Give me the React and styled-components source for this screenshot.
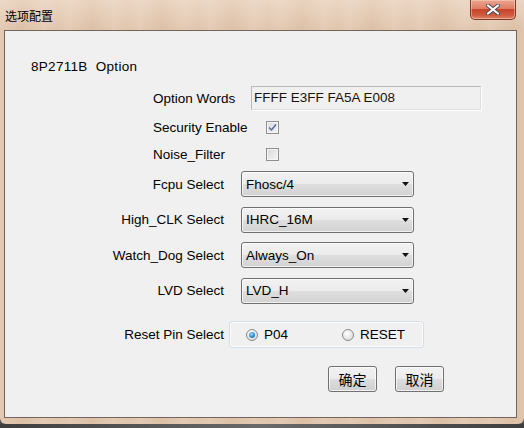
import React from "react";
import styled, { createGlobalStyle } from "styled-components";

const GlobalStyle = createGlobalStyle`
  html, body {
    margin: 0;
    padding: 0;
    background: #4f4f4f;
    font-family: "Liberation Sans", Arial, sans-serif;
  }
`;

const Window = styled.div`
  width: 524px;
  height: 424px;
  display: flex;
  flex-direction: column;
  border-radius: 0 0 6px 6px;
  background:
    linear-gradient(to bottom, rgba(255, 245, 235, 0.35), rgba(255, 245, 235, 0) 30px),
    repeating-linear-gradient(
      90deg,
      rgba(150, 100, 60, 0) 0px,
      rgba(150, 100, 60, 0.1) 22px,
      rgba(150, 100, 60, 0) 44px,
      rgba(150, 100, 60, 0.05) 58px,
      rgba(150, 100, 60, 0) 70px
    ),
    #e4cab3;
`;

const TitleBar = styled.div`
  height: 30px;
  display: flex;
  justify-content: space-between;
  align-items: flex-start;
  flex-shrink: 0;
`;

const Title = styled.div`
  padding: 9px 0 0 5px;
  font-family: "Noto Sans CJK SC", sans-serif;
  font-size: 12px;
  line-height: 14px;
  color: #000;
`;

const CloseButton = styled.div`
  width: 44px;
  height: 19px;
  margin-right: 8px;
  border: 1px solid #7d3b2c;
  border-top: none;
  border-radius: 0 0 5px 5px;
  display: flex;
  align-items: center;
  justify-content: center;
  background: linear-gradient(
    to bottom,
    #eba592 0%,
    #df7d65 45%,
    #c8442b 50%,
    #cf5a3f 80%,
    #e0866a 100%
  );
  box-shadow: inset 0 0 0 1px rgba(255, 220, 200, 0.45);
`;

const Client = styled.div`
  height: 386px;
  margin: 0 7px 0 4px;
  border: 1px solid #6f665e;
  background: #f0f0f0;
  display: flex;
  flex-direction: column;
  font-size: 13.5px;
  color: #000;
`;

const Heading = styled.div`
  margin: 28px 0 0 26px;
  line-height: 16px;
  height: 16px;
  white-space: pre;
  letter-spacing: 0.3px;
`;

const TopGrid = styled.div`
  margin: 11px 0 0 148px;
  display: grid;
  grid-template-columns: 98px auto;
  grid-template-rows: 24px 18px 18px;
  row-gap: 8.5px;
  align-items: center;
`;

const SelectGrid = styled.div`
  margin: ${(p) => p.$top}px 0 0 95px;
  display: grid;
  grid-template-columns: 124px auto;
  row-gap: 9.5px;
  align-items: center;
`;

const RightLabel = styled.div`
  text-align: right;
  white-space: nowrap;
`;

const Label = styled.div`
  white-space: nowrap;
`;

const WordsBox = styled.div`
  width: 226px;
  height: 22px;
  border: 1px solid #b9b9b9;
  border-right-color: #dedede;
  border-bottom-color: #dedede;
  box-shadow: 1px 1px 0 #fff;
  background: #f0f0f0;
  padding-left: 2px;
  box-sizing: content-box;
  line-height: 22px;
  color: #1c1206;
`;

const CheckBox = styled.span`
  margin-left: 15px;
  width: 11px;
  height: 11px;
  border: 1px solid #8e8f8f;
  background: linear-gradient(135deg, #d9d9d9, #f4f4f4);
  box-shadow: inset 0 0 0 1px #f6f6f6;
  display: flex;
  align-items: center;
  justify-content: center;
`;

const Dropdown = styled.div`
  margin-left: 17px;
  height: 24px;
  border: 1px solid #707070;
  border-radius: 3px;
  background: linear-gradient(to bottom, #f2f2f2 0%, #ebebeb 48%, #dedede 52%, #d2d2d2 100%);
  box-shadow: inset 0 0 0 1px rgba(255, 255, 255, 0.7);
  display: flex;
  align-items: center;
  justify-content: space-between;
  padding: 0 4px 0 4px;
  box-sizing: content-box;
  width: 163px;
`;

const RadioGroup = styled.div`
  margin-left: 5px;
  height: 25px;
  border: 1px solid #d5dfe5;
  border-radius: 3px;
  box-shadow: inset 0 0 0 1px #fbfbfb;
  display: flex;
  align-items: center;
  padding-left: 16px;
  box-sizing: content-box;
  width: 177px;
`;

const RadioItem = styled.label`
  display: flex;
  align-items: center;
  gap: 6px;
  width: ${(p) => p.$w}px;
`;

const RadioDot = styled.span`
  width: 10px;
  height: 10px;
  border-radius: 50%;
  border: 1px solid #8a8a8a;
  background: radial-gradient(circle at 40% 35%, #ffffff, #d4d4d4);
  display: flex;
  align-items: center;
  justify-content: center;
`;

const RadioInner = styled.span`
  width: 6px;
  height: 6px;
  border-radius: 50%;
  background: radial-gradient(circle at 40% 35%, #9fdcff 0%, #2b8ccc 55%, #0c5c94 100%);
`;

const ButtonRow = styled.div`
  margin-top: 18px;
  display: flex;
  justify-content: flex-end;
  gap: 18px;
  padding-right: 72px;
`;

const DialogButton = styled.div`
  width: 47px;
  height: 24px;
  border: 1px solid #707070;
  border-radius: 3px;
  background: linear-gradient(to bottom, #f2f2f2 0%, #ebebeb 48%, #dddddd 52%, #cfcfcf 100%);
  box-shadow: inset 0 0 0 1px rgba(255, 255, 255, 0.7);
  display: flex;
  align-items: center;
  justify-content: center;
  font-family: "Noto Sans CJK SC", sans-serif;
  font-size: 14px;
`;

const BottomShade = styled.div`
  height: 4px;
  background: linear-gradient(90deg, #3e3e3e 0%, #6a6a6a 50%, #3e3e3e 100%);
`;

function Check() {
  return (
    <svg width="9" height="9" viewBox="0 0 9 9">
      <path d="M1 4.5 L3.5 7 L8 1.5" fill="none" stroke="#5566a6" strokeWidth="1.5" />
    </svg>
  );
}

function Arrow() {
  return (
    <svg width="7" height="4" viewBox="0 0 7 4">
      <path d="M0 0 H7 L3.5 4 Z" fill="#111" />
    </svg>
  );
}

function CloseX() {
  return (
    <svg width="16" height="11" viewBox="0 0 16 11">
      <path d="M3 1.5 L13 9.5 M13 1.5 L3 9.5" stroke="#4a4a52" strokeWidth="4" strokeLinecap="round" />
      <path d="M3 1.5 L13 9.5 M13 1.5 L3 9.5" stroke="#fff" strokeWidth="2.2" strokeLinecap="round" />
    </svg>
  );
}

const selects = [
  ["Fcpu Select", "Fhosc/4"],
  ["High_CLK Select", "IHRC_16M"],
  ["Watch_Dog Select", "Always_On"],
  ["LVD Select", "LVD_H"],
];

export default function App() {
  return (
    <>
      <GlobalStyle />
      <Window>
        <TitleBar>
          <Title>选项配置</Title>
          <CloseButton>
            <CloseX />
          </CloseButton>
        </TitleBar>
        <Client>
          <Heading>8P2711B  Option</Heading>
          <TopGrid>
            <Label>Option Words</Label>
            <WordsBox>FFFF E3FF FA5A E008</WordsBox>
            <Label>Security Enable</Label>
            <CheckBox>
              <Check />
            </CheckBox>
            <Label>Noise_Filter</Label>
            <CheckBox />
          </TopGrid>
          <SelectGrid $top={8}>
            {selects.map(([label, value]) => (
              <React.Fragment key={label}>
                <RightLabel>{label}</RightLabel>
                <Dropdown>
                  <span>{value}</span>
                  <Arrow />
                </Dropdown>
              </React.Fragment>
            ))}
          </SelectGrid>
          <SelectGrid $top={17.5}>
            <RightLabel>Reset Pin Select</RightLabel>
            <RadioGroup>
              <RadioItem $w={96}>
                <RadioDot>
                  <RadioInner />
                </RadioDot>
                P04
              </RadioItem>
              <RadioItem $w={70}>
                <RadioDot />
                RESET
              </RadioItem>
            </RadioGroup>
          </SelectGrid>
          <ButtonRow>
            <DialogButton>确定</DialogButton>
            <DialogButton>取消</DialogButton>
          </ButtonRow>
        </Client>
      </Window>
      <BottomShade />
    </>
  );
}
